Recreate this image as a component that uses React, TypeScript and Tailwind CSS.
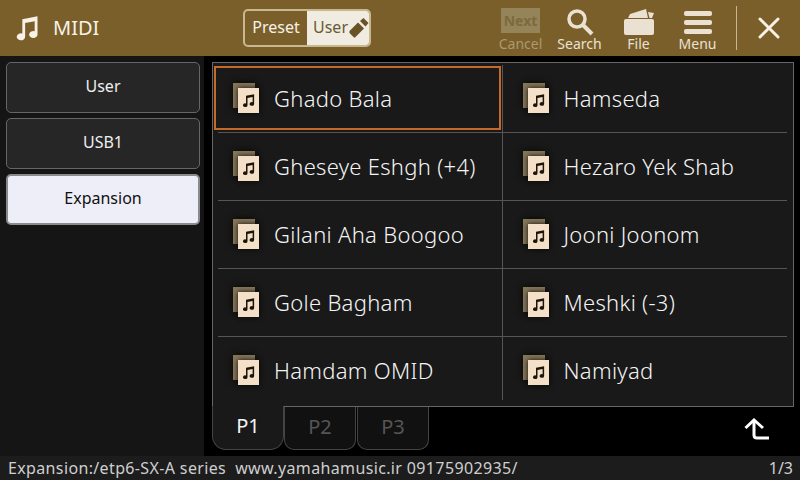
import { X } from "lucide-react";

const SONGS = [
  ["Ghado Bala", "Hamseda"],
  ["Gheseye Eshgh (+4)", "Hezaro Yek Shab"],
  ["Gilani Aha Boogoo", "Jooni Joonom"],
  ["Gole Bagham", "Meshki (-3)"],
  ["Hamdam OMID", "Namiyad"],
];

function NoteIcon({ className }: { className?: string }) {
  return (
    <svg viewBox="0 0 24 24" className={className} fill="currentColor">
      <path d="M8 4.5 L21 2 V17.5 A3.6 3 0 1 1 18.6 14.7 V6.2 L10.4 7.8 V19.5 A3.6 3 0 1 1 8 16.7 Z" />
    </svg>
  );
}

function SongIcon() {
  return (
    <div className="relative w-[28px] h-[30px] shrink-0 -mt-[2px]">
      <div className="absolute left-0 top-0 w-[22px] h-[25px] bg-[#857659] shadow-[0_0_7px_#0a0805]" />
      <div className="absolute left-[5px] top-[5px] w-[21px] h-[25px] bg-[#f4dfc8] flex items-center justify-center text-[#1c1408] shadow-[0_0_5px_#0a0805]">
        <NoteIcon className="w-[15px] h-[15px]" />
      </div>
    </div>
  );
}

function SideButton({ label, active }: { label: string; active?: boolean }) {
  return (
    <div
      className={
        active
          ? "h-[51px] pb-[3px] rounded-[5px] border-2 border-[#8a8a8e] bg-[#eeeef8] text-[#111] flex items-center justify-center text-[16px]"
          : "h-[51px] pb-[3px] rounded-[5px] border border-[#666] bg-[#262626] text-[#eee] flex items-center justify-center text-[16px]"
      }
    >
      {label}
    </div>
  );
}

function ToolButton({ label, children }: { label: string; children: React.ReactNode }) {
  return (
    <div className="flex flex-col items-center w-[59px] text-[14px] leading-[16px] text-[#ebe1d3]">
      <div className="h-[28px] flex items-center justify-center">{children}</div>
      <span>{label}</span>
    </div>
  );
}

export default function App() {
  return (
    <div className="w-[800px] h-[480px] overflow-hidden flex flex-col bg-black font-['Noto_Sans',sans-serif]">
      {/* Header */}
      <div className="h-[56px] shrink-0 bg-[#7a5f2b] flex items-center pl-[13px] text-[#f7f1e6]">
        <NoteIcon className="w-[28px] h-[28px]" />
        <span className="ml-[12px] w-[190px] text-[20px]">MIDI</span>
        <div className="flex h-[38px] w-[128px] rounded-[5px] border-2 border-[#c9b88f] overflow-hidden text-[16px]">
          <div className="w-[62px] pb-[2px] flex items-center justify-center">Preset</div>
          <div className="flex-1 bg-[#f0ece2] text-[#6b5a33] flex items-center pl-[6px]">
            <span className="pb-[2px]">User</span>
            <svg viewBox="0 0 20 20" className="ml-[1px] w-[20px] h-[20px]" fill="#6a5227">
              <path d="M0.5 13 L9 4.5 L15 10.5 L6.5 19 Q5.5 20 4.5 19 L1 15.5 Q0 14.5 0.5 13 Z" />
              <path d="M11 3 L14.5 0 L19.5 5 L16.5 8.5 Z" />
            </svg>
          </div>
        </div>
        <div className="ml-auto flex items-start mt-[4px]">
          <div className="flex flex-col items-center w-[59px] text-[14px] leading-[16px] text-[#aa9a70]">
            <div className="w-[39px] h-[25px] mb-[3px] bg-[#95835a] text-[#7c6a3c] font-bold flex items-center justify-center">
              Next
            </div>
            <span>Cancel</span>
          </div>
          <ToolButton label="Search">
            <svg viewBox="0 0 28 28" className="w-[28px] h-[28px]" fill="none" stroke="#ebe1d3">
              <circle cx="11" cy="11" r="8" strokeWidth="3.5" />
              <path d="M17 17 L26 26" strokeWidth="4" />
            </svg>
          </ToolButton>
          <ToolButton label="File">
            <svg viewBox="0 0 30 27" className="w-[30px] h-[27px]" fill="#ebe1d3">
              <path d="M4 9 L6 5 L22 0 L24 9 Z" />
              <path d="M24 3 L30 4 L28 9 L25.5 9 Z" />
              <path d="M0 12 Q0 10 2 10 H28 Q30 10 30 12 V24 Q30 26 28 26 H2 Q0 26 0 24 Z" />
            </svg>
          </ToolButton>
          <ToolButton label="Menu">
            <div className="flex flex-col gap-[4px] w-[28px]">
              <div className="h-[5px] rounded-[2px] bg-[#ebe1d3]" />
              <div className="h-[5px] rounded-[2px] bg-[#ebe1d3]" />
              <div className="h-[5px] rounded-[2px] bg-[#ebe1d3]" />
            </div>
          </ToolButton>
        </div>
        <div className="w-px h-[44px] bg-[#c9b88f] ml-[9px]" />
        <div className="w-[63px] flex justify-center">
          <X className="w-[36px] h-[36px]" strokeWidth={2} />
        </div>
      </div>

      {/* Body */}
      <div className="flex-1 flex min-h-0">
        <div className="w-[204px] shrink-0 bg-[#151515] pt-[6px] pl-[6px] pr-[4px] flex flex-col gap-[5px]">
          <SideButton label="User" />
          <SideButton label="USB1" />
          <SideButton label="Expansion" active />
        </div>

        <div className="flex-1 pl-[8px] pr-[6px] pt-[6px] flex flex-col">
          <div className="h-[345px] border border-[#666] bg-[#191919] pl-[5px] pr-[6px] pt-[2px] grid grid-cols-2 grid-rows-[repeat(5,68px)]">
            {SONGS.flat().map((song, i) => (
              <div
                key={song}
                className={[
                  "relative flex items-center text-[#f4f4f4] text-[22px] tracking-[0.3px] font-light gap-[13px]",
                  i < 8 ? "border-b border-[#555]" : "mb-[5px] pt-[4px]",
                  i % 2 === 0 ? "border-r border-[#555] pl-[15px]" : "pl-[20px]",
                ].join(" ")}
              >
                {i === 0 && (
                  <div className="absolute left-[-4px] top-[1px] right-[1px] bottom-[2px] border-2 border-[#c4692a]" />
                )}
                <SongIcon />
                <span>{song}</span>
              </div>
            ))}
          </div>

          <div className="flex items-start h-[43px]">
            <div className="w-[72px] h-[44px] -mt-px pb-[3px] rounded-b-[14px] border border-t-0 border-[#444] bg-[#191919] text-[#f4f4f4] text-[20px] flex items-center justify-center">
              P1
            </div>
            <div className="w-[72px] h-[43px] pb-[3px] rounded-b-[10px] border border-t-0 border-[#444] bg-[#111] text-[#555] text-[20px] flex items-center justify-center">
              P2
            </div>
            <div className="w-[72px] h-[43px] ml-px pb-[3px] rounded-b-[10px] border border-t-0 border-[#444] bg-[#111] text-[#555] text-[20px] flex items-center justify-center">
              P3
            </div>
            <svg viewBox="0 0 26 24" className="ml-auto mr-[24px] mt-[11px] w-[26px] h-[24px]" fill="none" stroke="#fff" strokeWidth="3">
              <path d="M1.5 10 L10 2 L19 10" />
              <path d="M10 2 V17 Q10 20 13 20 H25" />
            </svg>
          </div>
        </div>
      </div>

      {/* Status bar */}
      <div className="h-[24px] shrink-0 bg-[#1c1c1c] flex items-center justify-between pl-[8px] pr-[7px] text-[16px] text-[#cfcfcf]">
        <span className="whitespace-pre tracking-[0.36px]">Expansion:/etp6-SX-A series  www.yamahamusic.ir 09175902935/</span>
        <span>1/3</span>
      </div>
    </div>
  );
}
